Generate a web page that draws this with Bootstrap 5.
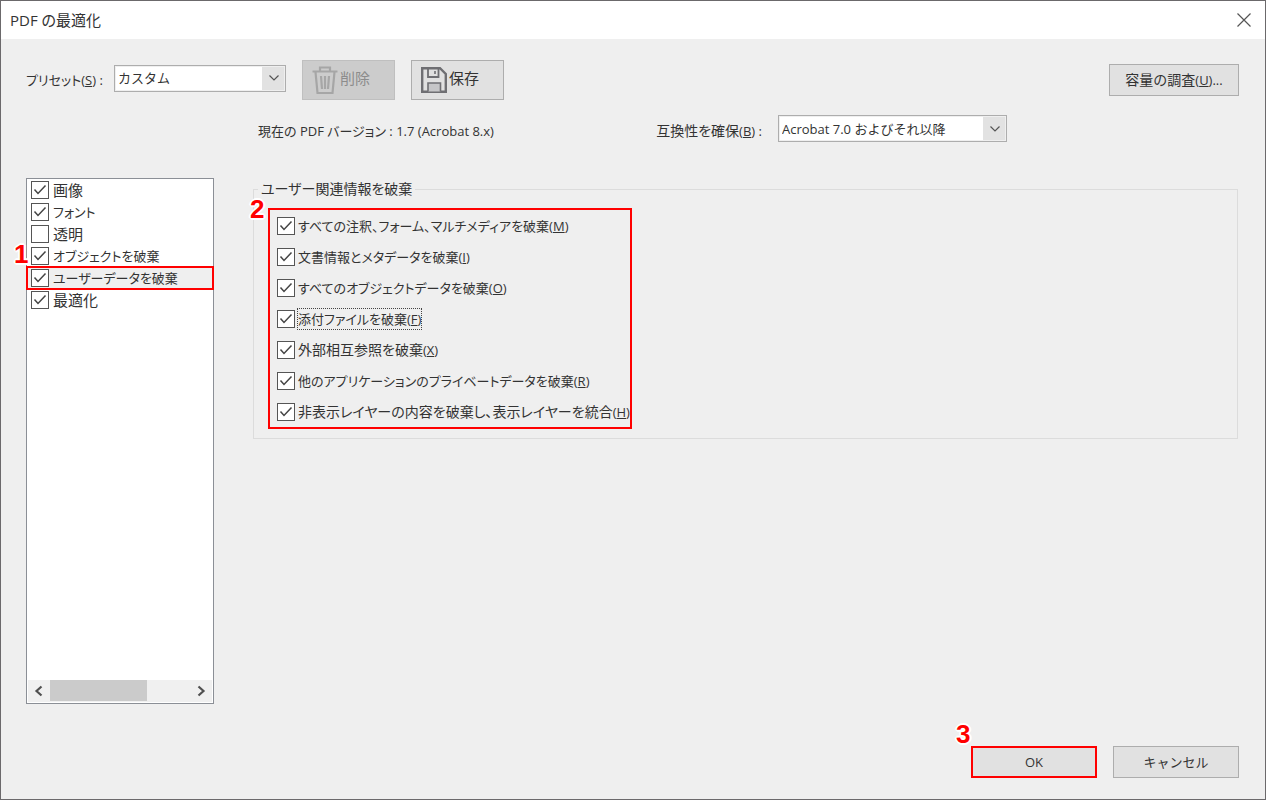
<!DOCTYPE html>
<html lang="ja">
<head>
<meta charset="utf-8">
<meta name="viewport" content="width=device-width, initial-scale=1">
<title>PDF の最適化</title>
<link href="https://cdn.jsdelivr.net/npm/bootstrap@5.3.0/dist/css/bootstrap.min.css" rel="stylesheet">
<style>
  body {
    font-family: "Open Sans", "Noto Sans CJK JP", sans-serif;
    font-size: 14px;
    line-height: 20px;
    font-feature-settings: "palt";
    color: #333;
    background: #efefef;
    border: 1px solid #6b696b;
  }
  .latin, .kana { font-size: 13px; }
  .kanji { font-size: 15px; }
  .title-bar { height: 38px; background: #fff; padding: 0 12px 0 9px; }
  .title-bar h1 { font-size: 15px; line-height: 20px; }
  .close-btn { width: 18px; height: 18px; color: #555; }
  .close-btn svg, .tool-btn svg, .scroll-btn svg { display: block; }
  .dialog-main { padding: 21px 26px 42px 25px; }
  .combo {
    height: 27px;
    padding: 0 28px 0 3px;
    border: 1px solid #adadad;
    border-radius: 0;
    color: #333;
    font-size: 13px;
    line-height: 20px;
    background:
      url("data:image/svg+xml,%3Csvg xmlns='http://www.w3.org/2000/svg' width='12' height='8'%3E%3Cpath d='M1.5 1.5 6 6l4.500-4.500' fill='none' stroke='%23555' stroke-width='1.2'/%3E%3C/svg%3E") right 5px center / 12px 8px no-repeat,
      linear-gradient(#e2e2e2, #e2e2e2) right center / 23px 100% no-repeat,
      #fff;
    box-shadow: inset 0 0 0 1px #efefef;
  }
  .preset-label { width: 88px; }
  .preset-combo { width: 172px; }
  .compat-combo { width: 229px; }
  .push-btn {
    background: #e1e1e1;
    border: 1px solid #adadad;
    border-radius: 0;
    color: #333;
    font-size: 14px;
    line-height: 20px;
    height: 32px;
    padding: 0;
  }
  .wide-btn { width: 126px; }
  .survey-btn { width: 130px; }
  .tool-btn { width: 93px; height: 40px; padding: 0 0 0 7px; }
  .tool-btn .caption { align-self: flex-start; padding-top: 7px; font-size: 15px; }
  .tool-btn:disabled { background: #ccc; border-color: #bfbfbf; color: #8c8c8c; opacity: 1; }
  .push-btn.kana { font-size: 13px; }
  .ok-btn { border: 2px solid #f00; }
  .version-row { padding: 15px 232px 0 232px; }
  .panes { padding: 36px 1px 0 0; gap: 39px; }
  .category-box { width: 188px; background: #fff; border: 1px solid #8b8f96; }
  .category-item { height: 22px; padding-left: 4px; gap: 4px; }
  .category-item.current {
    position: relative;
    z-index: 1;
    background: #efefef;
    outline: 2px solid #f00;
    outline-offset: -1px;
  }
  .tick {
    appearance: none;
    flex: none;
    width: 18px;
    height: 18px;
    margin: 0;
    border: 1px solid #555;
    background: #fff;
  }
  .tick:checked {
    background: #fff url("data:image/svg+xml,%3Csvg xmlns='http://www.w3.org/2000/svg' width='16' height='16'%3E%3Cpath d='M2.5 7.5 6 11.5l7.500-8' fill='none' stroke='%23444' stroke-width='1.5'/%3E%3C/svg%3E") center no-repeat;
  }
  .scroll-strip { height: 22px; margin: 1px; background: #f0f0f0; }
  .scroll-btn { width: 22px; color: #505050; }
  .scroll-track { flex: 1; }
  .scroll-fill { width: 69%; height: 21px; background: #cbcbcb; }
  .group-box { border: 1px solid #dcdcdc; padding: 7px 14px 9px; margin-top: -1px; }
  .group-box legend {
    float: none;
    width: auto;
    margin: 0 0 0 -10px;
    padding: 0 3px;
    font-size: 14px;
    line-height: 24px;
  }
  .option-frame { width: fit-content; min-width: 363px; border: 2px solid #f00; padding-left: 7px; }
  .option-row { height: 31px; gap: 3px; }
  .focused { outline: 1px dotted #444; }
  .step {
    position: absolute;
    font: bold 26px/26px "Liberation Sans", sans-serif;
    color: #f00;
    z-index: 2;
    text-shadow: 2px 0 #fff, -2px 0 #fff, 0 2px #fff, 0 -2px #fff, 1px 1px #fff, -1px -1px #fff, 1px -1px #fff, -1px 1px #fff;
  }
  .step-1 { left: -13px; top: -26px; }
  .step-2 { left: -20px; top: -14px; }
  .step-3 { left: -15px; top: -25px; }
  .dialog-footer { padding: 0 26px 21px; }
</style>
</head>
<body class="min-vh-100 d-flex flex-column">

<header class="title-bar d-flex align-items-center justify-content-between">
  <h1 class="fw-normal m-0">PDF の最適化</h1>
  <button type="button" class="close-btn btn p-0 border-0" aria-label="閉じる">
    <svg width="18" height="18" viewBox="0 0 18 18" fill="none" stroke="currentColor" stroke-width="1.2"><path d="M2.5 2.500l13 13M15.500 2.500l-13 13"/></svg>
  </button>
</header>

<main class="dialog-main flex-grow-1 d-flex flex-column">
  <div class="d-flex align-items-center">
    <label for="preset" class="preset-label kana">プリセット(<u>S</u>) :</label>
    <select id="preset" class="combo preset-combo form-select mb-1"><option>カスタム</option></select>
    <button type="button" class="push-btn tool-btn btn d-flex align-items-center ms-3" disabled>
      <svg width="30" height="30" viewBox="0 0 30 30" fill="none" stroke="#a6a6a6" stroke-width="2.2"><path d="M2.5 6.500h25M10 6V2.500h10V6M5.500 7l2 21h15l2-21M11 11l1 13M15 11v13M19 11l-1 13"/></svg>
      <span class="caption">削除</span>
    </button>
    <button type="button" class="push-btn tool-btn btn d-flex align-items-center ms-3">
      <svg width="30" height="30" viewBox="0 0 30 30" fill="none" stroke="#6f6f73" stroke-width="2.4"><path d="M3.2 3.200H21L26.800 9v17.800H3.200z"/><path d="M9 3.500V12h10.500V3.500" stroke-width="1.8"/><path d="M9 26.500V18h12.500v8.500" fill="#c6c6c8" stroke-width="1.6"/><path d="M16 6v3" stroke-width="1.6"/></svg>
      <span class="caption">保存</span>
    </button>
    <button type="button" class="push-btn survey-btn btn ms-auto">容量の調査<span class="latin">(<u>U</u>)...</span></button>
  </div>

  <div class="version-row d-flex align-items-center justify-content-between">
    <div class="kana pt-1">現在の PDF バージョン : 1.7 (Acrobat 8.x)</div>
    <div class="d-flex align-items-center gap-3">
      <label for="compat" class="pt-1">互換性を確保<span class="latin">(<u>B</u>) :</span></label>
      <select id="compat" class="combo compat-combo form-select"><option>Acrobat 7.0 およびそれ以降</option></select>
    </div>
  </div>

  <div class="panes d-flex flex-grow-1">
    <div class="category-box d-flex flex-column">
      <label class="category-item kanji d-flex align-items-center"><input type="checkbox" class="tick" checked>画像</label>
      <label class="category-item kana d-flex align-items-center"><input type="checkbox" class="tick" checked>フォント</label>
      <label class="category-item kanji d-flex align-items-center"><input type="checkbox" class="tick">透明</label>
      <label class="category-item kana d-flex align-items-center"><input type="checkbox" class="tick" checked>オブジェクトを破棄</label>
      <label class="category-item current kana d-flex align-items-center"><input type="checkbox" class="tick" checked>ユーザーデータを破棄<span class="step step-1">1</span></label>
      <label class="category-item kanji d-flex align-items-center"><input type="checkbox" class="tick" checked>最適化</label>
      <div class="scroll-strip d-flex mt-auto">
        <button type="button" class="scroll-btn btn border-0 rounded-0 p-0 d-flex align-items-center justify-content-center" aria-label="左へスクロール">
          <svg width="10" height="12" viewBox="0 0 10 12" fill="none" stroke="currentColor" stroke-width="2.2"><path d="M7.5 1.500 2.500 6l5 4.500"/></svg>
        </button>
        <div class="scroll-track"><div class="scroll-fill"></div></div>
        <button type="button" class="scroll-btn btn border-0 rounded-0 p-0 d-flex align-items-center justify-content-center" aria-label="右へスクロール">
          <svg width="10" height="12" viewBox="0 0 10 12" fill="none" stroke="currentColor" stroke-width="2.2"><path d="M2.5 1.500l5 4.500-5 4.500"/></svg>
        </button>
      </div>
    </div>

    <fieldset class="group-box flex-grow-1 align-self-start">
      <legend>ユーザー関連情報を破棄</legend>
      <div class="option-frame position-relative">
        <span class="step step-2">2</span>
        <label class="option-row kana d-flex align-items-center"><input type="checkbox" class="tick" checked><span>すべての注釈、フォーム、マルチメディアを破棄(<u>M</u>)</span></label>
        <label class="option-row kana d-flex align-items-center"><input type="checkbox" class="tick" checked><span>文書情報とメタデータを破棄(<u>I</u>)</span></label>
        <label class="option-row kana d-flex align-items-center"><input type="checkbox" class="tick" checked><span>すべてのオブジェクトデータを破棄(<u>O</u>)</span></label>
        <label class="option-row kana d-flex align-items-center"><input type="checkbox" class="tick" checked><span class="focused">添付ファイルを破棄(<u>F</u>)</span></label>
        <label class="option-row d-flex align-items-center"><input type="checkbox" class="tick" checked><span>外部相互参照を破棄<span class="latin">(<u>X</u>)</span></span></label>
        <label class="option-row kana d-flex align-items-center"><input type="checkbox" class="tick" checked><span>他のアプリケーションのプライベートデータを破棄(<u>R</u>)</span></label>
        <label class="option-row d-flex align-items-center"><input type="checkbox" class="tick" checked><span>非表示レイヤーの内容を破棄し、表示レイヤーを統合<span class="latin">(<u>H</u>)</span></span></label>
      </div>
    </fieldset>
  </div>
</main>

<footer class="dialog-footer d-flex justify-content-end gap-3">
  <div class="position-relative">
    <span class="step step-3">3</span>
    <button type="button" class="push-btn wide-btn ok-btn kana btn">OK</button>
  </div>
  <button type="button" class="push-btn wide-btn kana btn">キャンセル</button>
</footer>

<script src="https://cdn.jsdelivr.net/npm/bootstrap@5.3.0/dist/js/bootstrap.bundle.min.js"></script>
</body>
</html>
